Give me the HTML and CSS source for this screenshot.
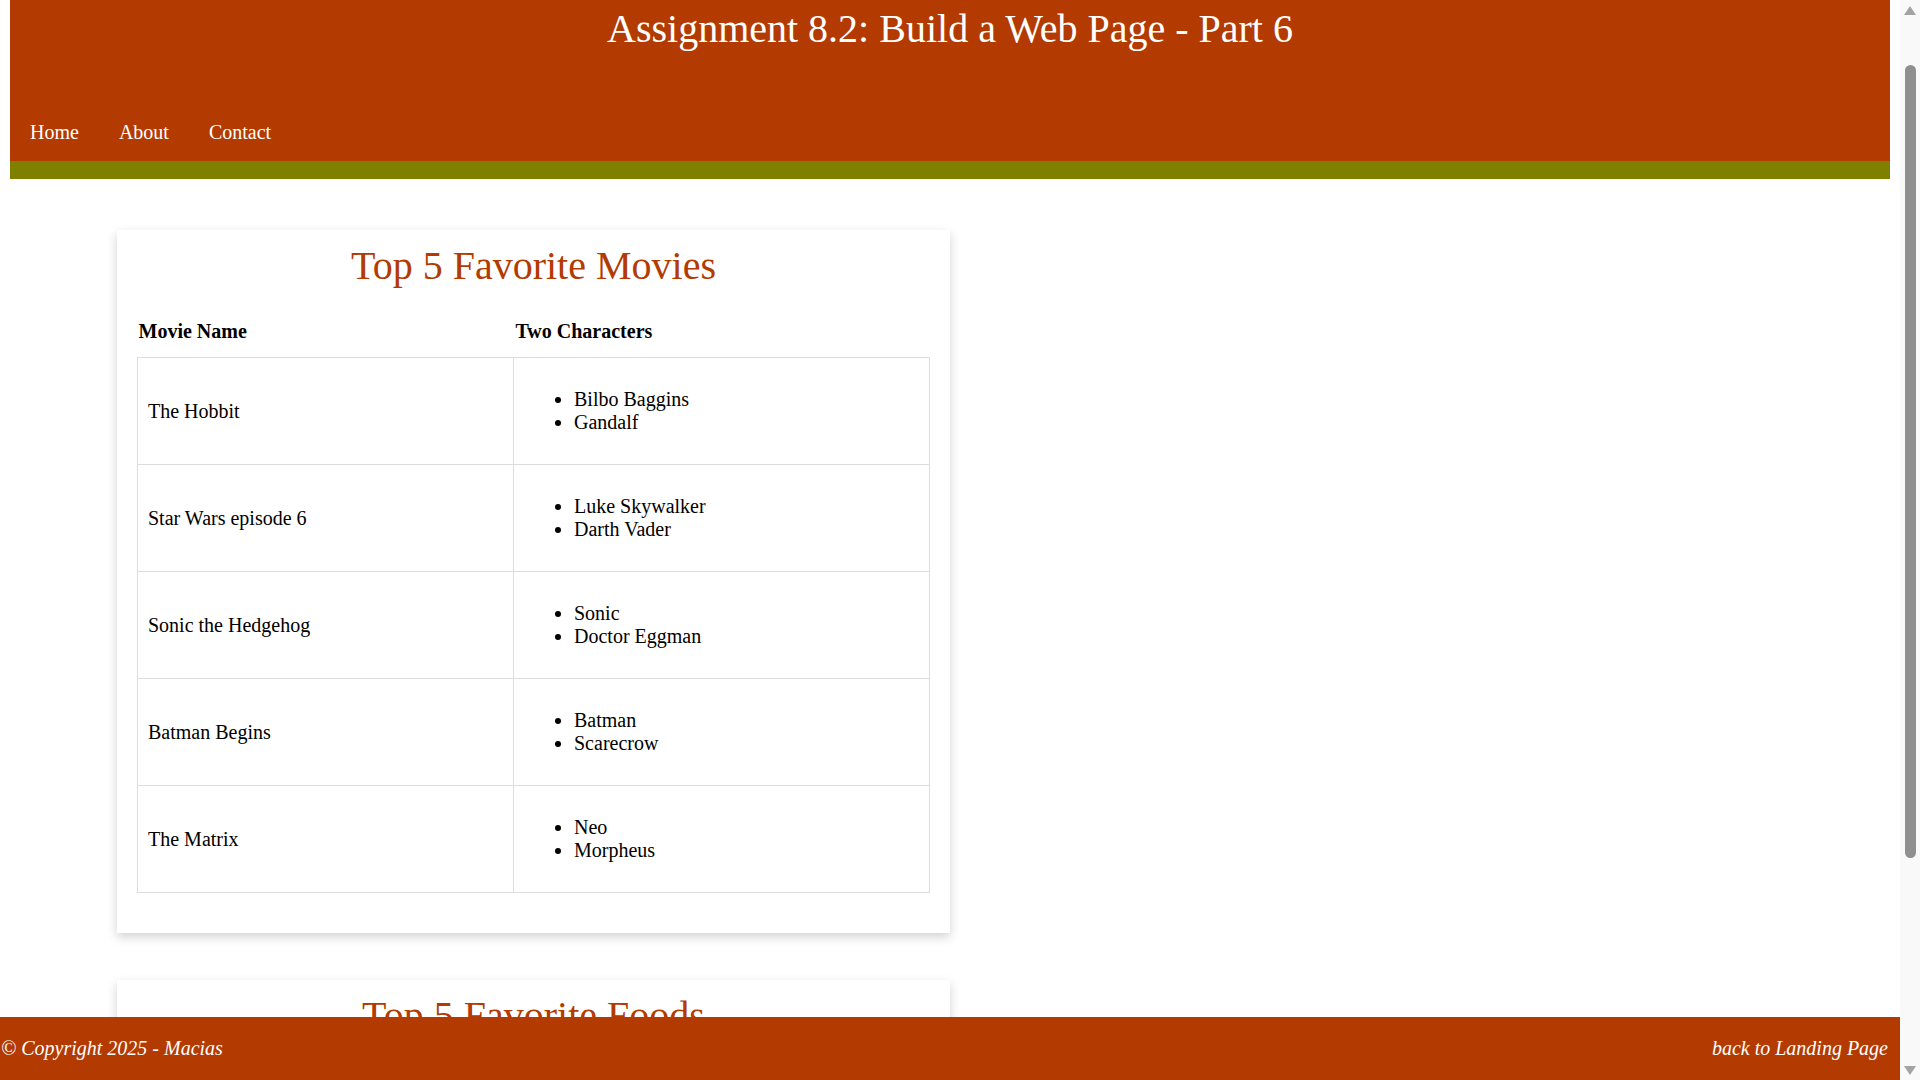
FILE: index.html
```html
<!DOCTYPE html>
<html lang="en">
<head>
<meta charset="utf-8">
<title>Assignment 8.2: Build a Web Page - Part 6</title>
<link rel="stylesheet" href="styles.css">
</head>
<body>
<header class="site-header">
  <h1 class="site-title">Assignment 8.2: Build a Web Page - Part 6</h1>
  <nav class="site-nav">
    <a href="#" class="nav-link">Home</a>
    <a href="#" class="nav-link">About</a>
    <a href="#" class="nav-link">Contact</a>
  </nav>
</header>

<main class="content">
  <section class="card">
    <h2 class="card-title">Top 5 Favorite Movies</h2>
    <table class="fav-table">
      <thead>
        <tr><th class="col-name">Movie Name</th><th>Two Characters</th></tr>
      </thead>
      <tbody>
        <tr><td>The Hobbit</td><td><ul><li>Bilbo Baggins</li><li>Gandalf</li></ul></td></tr>
        <tr><td>Star Wars episode 6</td><td><ul><li>Luke Skywalker</li><li>Darth Vader</li></ul></td></tr>
        <tr><td>Sonic the Hedgehog</td><td><ul><li>Sonic</li><li>Doctor Eggman</li></ul></td></tr>
        <tr><td>Batman Begins</td><td><ul><li>Batman</li><li>Scarecrow</li></ul></td></tr>
        <tr><td>The Matrix</td><td><ul><li>Neo</li><li>Morpheus</li></ul></td></tr>
      </tbody>
    </table>
  </section>

  <section class="card card-short">
    <h2 class="card-title">Top 5 Favorite Foods</h2>
  </section>
</main>

<footer class="site-footer">
  <p class="copyright">&copy; Copyright 2025 - Macias</p>
  <a href="#" class="back-link">back to Landing Page</a>
</footer>

<div class="scrollbar" aria-hidden="true">
  <span class="sb-arrow sb-up"></span>
  <span class="sb-track"><span class="sb-thumb"></span></span>
  <span class="sb-arrow sb-down"></span>
</div>
</body>
</html>
```

FILE: styles.css
```css
html {
  font-family: "Liberation Serif", "Times New Roman", serif;
  font-size: 20px;
}

body {
  margin: 0 30px 0 10px;
  color: #000;
  background: #fff;
}

.site-header {
  background: #b33a00;
  border-bottom: 18px solid #808000;
  height: 161px;
  display: flex;
  flex-direction: column;
  justify-content: space-between;
}

.site-title {
  margin: 0;
  padding-top: 6px;
  font-size: 40px;
  line-height: 46px;
  font-weight: normal;
  text-align: center;
  color: #fff;
}

.site-nav {
  display: flex;
}

.nav-link {
  padding: 17px 20px;
  line-height: 23px;
  color: #fff;
  text-decoration: none;
}

.content {
  padding: 51px 0 160px 107px;
}

.card {
  width: 833px;
  box-sizing: border-box;
  padding: 13px 20px 40px;
  margin-bottom: 47px;
  background: #fff;
  box-shadow: 0 4px 10px rgba(0, 0, 0, 0.18);
}

.card-short {
  min-height: 380px;
}

.card-title {
  margin: 0 0 15px;
  font-size: 40px;
  line-height: 46px;
  font-weight: normal;
  text-align: center;
  color: #b33a00;
}

.fav-table {
  width: 100%;
  border-collapse: collapse;
}

.fav-table th {
  text-align: left;
  font-weight: bold;
  padding: 16px 2px 14px;
  line-height: 23px;
}

.fav-table .col-name {
  width: 373px;
  padding-left: 1px;
}

.fav-table td {
  border: 1px solid #ddd;
  padding: 10px;
  line-height: 23px;
}

.fav-table ul {
  margin: 20px 0;
  padding-left: 50px;
}

.site-footer {
  position: fixed;
  left: 0;
  right: 20px;
  bottom: 0;
  height: 63px;
  padding: 0 12px 0 1px;
  background: #b33a00;
  color: #fff;
  font-style: italic;
  display: flex;
  justify-content: space-between;
  align-items: center;
}

.copyright {
  margin: 0;
}

.back-link {
  color: #fff;
  text-decoration: none;
}

/* drawn browser scrollbar */
.scrollbar {
  position: fixed;
  top: 0;
  right: 0;
  width: 20px;
  height: 100%;
  background: #f9f9f9;
  display: flex;
  flex-direction: column;
  align-items: center;
}

.sb-arrow {
  width: 0;
  height: 0;
  border-left: 6px solid transparent;
  border-right: 6px solid transparent;
}

.sb-up {
  margin-top: 6px;
  border-bottom: 9px solid #a3a3a3;
}

.sb-down {
  margin-bottom: 5px;
  border-top: 9px solid #a3a3a3;
}

.sb-track {
  flex: 1;
  display: flex;
  flex-direction: column;
  align-items: center;
}

.sb-thumb {
  margin-top: 50px;
  width: 11px;
  height: 793px;
  border-radius: 6px;
  background: #8f8f8f;
}
```
